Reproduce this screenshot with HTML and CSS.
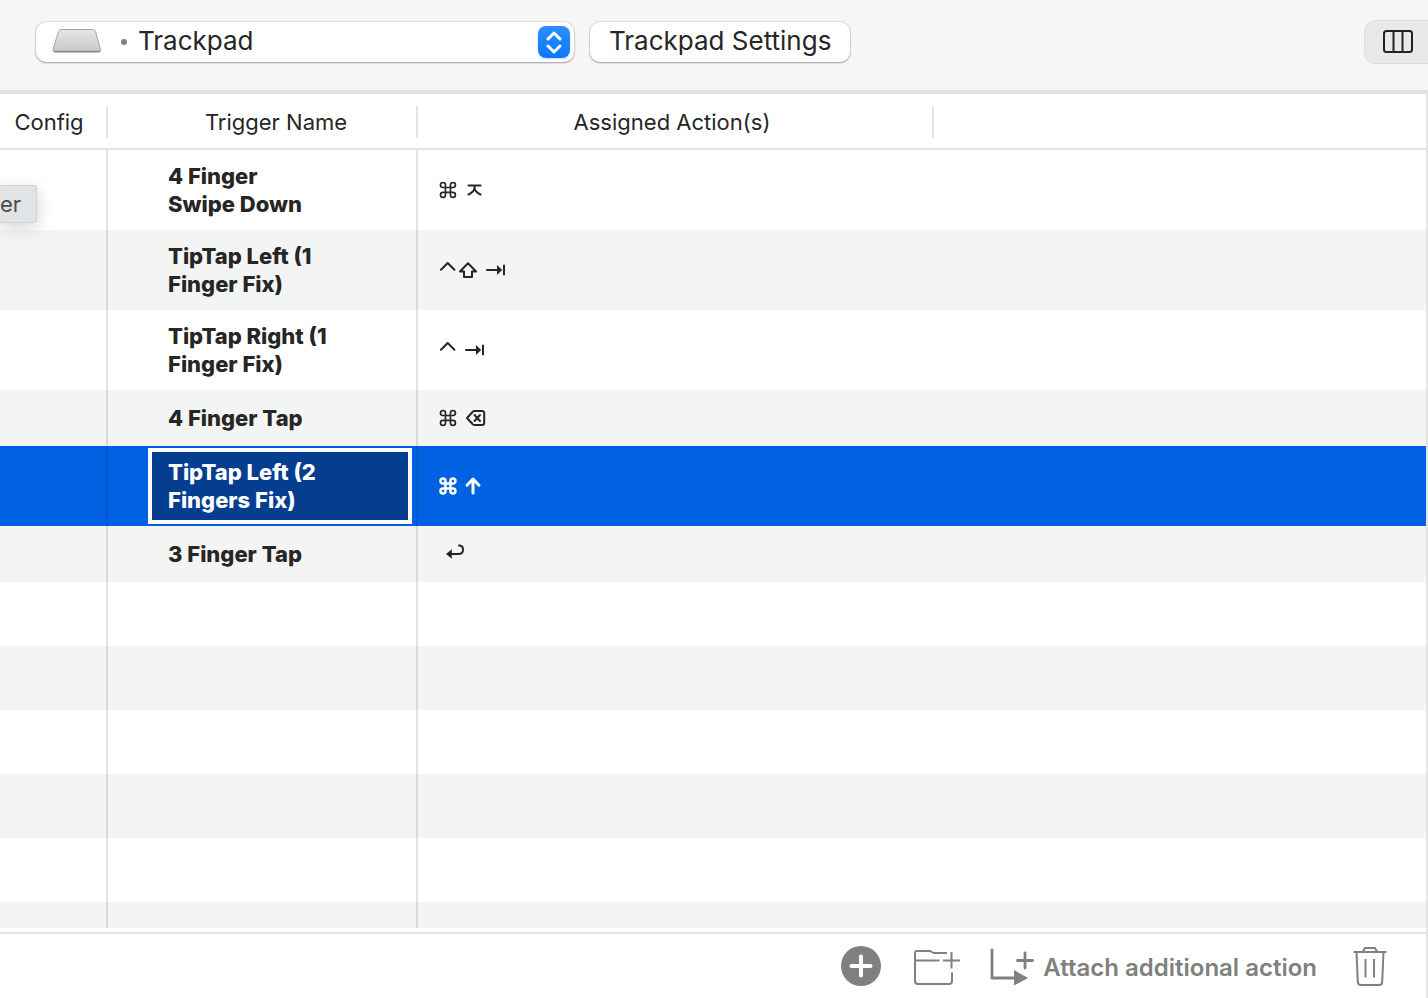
FILE: index.html
```html
<!DOCTYPE html>
<html lang="en">
<head>
<meta charset="utf-8">
<title>Trackpad triggers</title>
<link rel="stylesheet" href="styles.css">
</head>
<body>
<svg class="defs" aria-hidden="true">
  <symbol id="command" viewBox="0 0 28 28"><path transform="translate(2 4) scale(.83)" d="M18 3a3 3 0 0 0-3 3v12a3 3 0 0 0 3 3 3 3 0 0 0 3-3 3 3 0 0 0-3-3H6a3 3 0 0 0-3 3 3 3 0 0 0 3 3 3 3 0 0 0 3-3V6a3 3 0 0 0-3-3 3 3 0 0 0-3 3 3 3 0 0 0 3 3h12a3 3 0 0 0 3-3 3 3 0 0 0-3-3z"/></symbol>
  <symbol id="control" viewBox="0 0 28 28"><path d="M5 13.700l6.700-6.700 6.700 6.700"/></symbol>
  <symbol id="tab" viewBox="0 0 28 28"><path d="M3 14h11M20 9.500v9"/><path class="solid" d="M13 9l5.200 5-5.200 5z"/></symbol>
</svg>

<header class="toolbar">
  <div class="picker">
    <svg class="picker-icon" width="50" height="26" viewBox="0 0 50 26" aria-hidden="true">
      <defs><linearGradient id="pad" x1="0" y1="0" x2="0" y2="1"><stop offset="0" stop-color="#e6e6e6"/><stop offset="1" stop-color="#c8c8c8"/></linearGradient></defs>
      <path d="M9.500 1.500h31q2.200 0 3 2l5 18q.6 2.500-2 2.500H3q-2.600 0-2-2.500l5.500-18q.8-2 3-2z" fill="url(#pad)" stroke="#a6a6a6"/>
      <path d="M2 23.500h46" stroke="#8c8c8c" stroke-width="1.500"/>
    </svg>
    <span class="dot"></span>
    <select class="picker-select" aria-label="Device"><option>Trackpad</option></select>
    <span class="stepper">
      <svg width="32" height="32" viewBox="0 0 32 32" aria-hidden="true"><path d="M10 13l6-6 6 6M10 20l6 6 6-6"/></svg>
    </span>
  </div>
  <button class="push" type="button">Trackpad Settings</button>
  <button class="segment" type="button" aria-label="Column view">
    <svg width="32" height="26" viewBox="0 0 32 26" aria-hidden="true"><rect x="2" y="2" width="28" height="21" rx="2.500" fill="none" stroke="#222" stroke-width="2"/><path d="M11.500 2v21M20.500 2v21" stroke="#222" stroke-width="2"/></svg>
  </button>
</header>

<main class="pane">
  <div class="scroller">
    <table class="triggers">
      <colgroup><col class="col-config"><col class="col-name"><col class="col-action"><col></colgroup>
      <thead>
        <tr>
          <th scope="col"><div class="head head-config">Config</div></th>
          <th scope="col"><div class="head head-name">Trigger Name</div></th>
          <th scope="col"><div class="head head-action">Assigned Action(s)</div></th>
          <td></td>
        </tr>
      </thead>
      <tbody>
        <tr>
          <td></td><td class="name"><div class="label">4 Finger<br>Swipe Down</div></td>
          <td class="keys"><svg width="80" height="28" role="img" aria-label="Command Enter"><use href="#command" width="28" height="28"/><path d="M32.500 9.500h12M38.500 9.500v2q0 4-6 7M38.500 11.500q0 4 6 7"/></svg></td><td></td>
        </tr>
        <tr>
          <td></td><td class="name"><div class="label">TipTap Left (1<br>Finger Fix)</div></td>
          <td class="keys"><svg width="80" height="28" role="img" aria-label="Control Shift Tab"><use href="#control" width="28" height="28"/><path d="M32 7.300l8 8.200h-4V21h-8v-5.500h-4z"/><use href="#tab" x="48" width="28" height="28"/></svg></td><td></td>
        </tr>
        <tr>
          <td></td><td class="name"><div class="label">TipTap Right (1<br>Finger Fix)</div></td>
          <td class="keys"><svg width="80" height="28" role="img" aria-label="Control Tab"><use href="#control" width="28" height="28"/><use href="#tab" x="27" width="28" height="28"/></svg></td><td></td>
        </tr>
        <tr>
          <td></td><td class="name"><div class="label">4 Finger Tap</div></td>
          <td class="keys"><svg width="80" height="28" role="img" aria-label="Command Delete"><use href="#command" width="28" height="28"/><path d="M31 14l5.500-6q.8-1 2-1H46q2.200 0 2.200 2.200v9.600Q48.200 21 46 21h-7.500q-1.200 0-2-1zM38.500 11l5.500 6M44 11l-5.500 6"/></svg></td><td></td>
        </tr>
        <tr class="selected" aria-selected="true">
          <td></td><td class="name"><div class="label">TipTap Left (2<br>Fingers Fix)</div></td>
          <td class="keys"><svg width="80" height="28" role="img" aria-label="Command Up"><use href="#command" width="28" height="28"/><path d="M37 21V7.500M31 13.200L37 7l6 6.200"/></svg></td><td></td>
        </tr>
        <tr>
          <td></td><td class="name"><div class="label">3 Finger Tap</div></td>
          <td class="keys"><svg width="80" height="28" role="img" aria-label="Return"><path d="M14 14h8.500c3 0 4.500-2 4.500-4.500S25.500 5.500 23 5.500"/><path class="solid" d="M15.800 9.200v9.600L10 14z"/></svg></td><td></td>
        </tr>
        <tr class="blank"><td></td><td></td><td></td><td></td></tr>
        <tr class="blank"><td></td><td></td><td></td><td></td></tr>
        <tr class="blank"><td></td><td></td><td></td><td></td></tr>
        <tr class="blank"><td></td><td></td><td></td><td></td></tr>
        <tr class="blank"><td></td><td></td><td></td><td></td></tr>
        <tr class="blank"><td></td><td></td><td></td><td></td></tr>
      </tbody>
    </table>
  </div>
  <div class="tip" role="tooltip">er</div>
  <footer class="actions">
    <button class="tool" type="button" aria-label="Add">
      <svg width="40" height="40" viewBox="0 0 40 40" aria-hidden="true"><circle cx="20" cy="20" r="20" fill="#808080"/><path d="M20 10.500v19M10.500 20h19" stroke="#fff" stroke-width="4" stroke-linecap="round"/></svg>
    </button>
    <button class="tool" type="button" aria-label="New group">
      <svg width="50" height="40" viewBox="0 0 50 40" aria-hidden="true"><path d="M41 26.500V35q0 3-3 3H7q-3 0-3-3V7q0-2 2-2h12q2 0 2.800 1t2.700 1H36M4 14.500h24.500M40.500 6v16.500M32 14.500h17" fill="none" stroke="#808080" stroke-width="2"/></svg>
    </button>
    <button class="tool tool-attach" type="button">
      <svg width="46" height="40" viewBox="0 0 46 40" aria-hidden="true"><path d="M3 4v28h22M36 7v15M28.500 14.500h15" fill="none" stroke="#808080" stroke-width="2.800" stroke-linecap="round" stroke-linejoin="round"/><path d="M25 24l14 8-14 7.500z" fill="#808080"/></svg>
      <span class="tool-text">Attach additional action</span>
    </button>
    <button class="tool" type="button" aria-label="Delete">
      <svg width="34" height="40" viewBox="0 0 34 40" aria-hidden="true"><path d="M.5 6h33M10 5.500L12 2h10l2 3.500M3.500 6l1.300 30q.2 3 3 3h18.400q2.800 0 3-3l1.300-30M12.500 13v18.500M21 13v18.500" fill="none" stroke="#808080" stroke-width="2"/></svg>
    </button>
  </footer>
</main>
</body>
</html>
```

FILE: styles.css
```css
* { box-sizing: border-box; }
body {
  margin: 0;
  height: 100vh;
  display: flex;
  flex-direction: column;
  overflow: hidden;
  background: #fff;
  color: #262626;
  font-family: Inter, "Liberation Sans", sans-serif;
  font-size: 22px;
  line-height: 28px;
}
button, select { font: inherit; color: inherit; border: 0; margin: 0; }
svg { display: block; flex: none; }
.defs { position: absolute; width: 0; height: 0; }

.toolbar {
  display: flex;
  align-items: center;
  gap: 16px;
  padding: 20px 0 26px 36px;
  background: #f6f6f5;
  border-bottom: 4px solid #e0e0e0;
  font-size: 26px;
}
.picker, .push {
  height: 40px;
  background: #fff;
  border-radius: 10px;
  box-shadow: 0 0 1px 1px rgba(0, 0, 0, .08), 0 1px 2px rgba(0, 0, 0, .3);
}
.picker {
  flex: 0 1 538px;
  display: flex;
  align-items: center;
  padding: 0 4px 0 16px;
}
.picker-icon { margin-bottom: 2px; }
.dot { width: 6px; height: 6px; margin: 0 11px 0 19px; border-radius: 50%; background: #808080; }
.picker-select {
  flex: 1;
  min-width: 0;
  height: 40px;
  padding: 0 0 2px;
  appearance: none;
  background: transparent;
}
.stepper { border-radius: 8px; background: linear-gradient(#2b8fff, #0a78ff); box-shadow: 0 1px 2px rgba(0, 90, 220, .25); }
.stepper path { fill: none; stroke: #fff; stroke-width: 3; stroke-linecap: round; stroke-linejoin: round; }
.push { padding: 0 19px 2px; white-space: nowrap; }
.segment {
  width: 64px;
  height: 44px;
  margin-left: auto;
  padding: 0 0 0 17px;
  border: 1px solid #dededd;
  border-right: 0;
  border-radius: 12px 0 0 12px;
  background: #e9e9e9;
}

.pane {
  position: relative;
  flex: 1;
  min-height: 0;
  display: flex;
  flex-direction: column;
  border-right: 2px solid #e4e4e4;
}
.scroller { flex: 1; min-height: 0; overflow: hidden; }
.triggers { width: 100%; table-layout: fixed; border-spacing: 0; }
.col-config { width: 108px; }
.col-name { width: 310px; }
.col-action { width: 516px; }
td, th { padding: 0; font-weight: 400; }
thead th, thead td { padding: 12px 0 10px; border-bottom: 2px solid #e4e4e4; }
.head { height: 32px; line-height: 32px; border-right: 2px solid #e4e4e4; text-align: center; white-space: nowrap; }
.head-config { padding-right: 8px; }
.head-name { padding-left: 28px; }
.head-action { padding-right: 6px; }

tbody td { height: 56px; border-right: 2px solid rgba(0, 0, 0, .1); }
tbody td:nth-child(n+3) { border-right: 0; }
tbody tr:nth-child(even) { background: #f3f4f4; }
tbody .blank td { height: 64px; }
.name { padding: 2px 4px 2px 40px; font-weight: 800; white-space: nowrap; }
.label { padding: 6px 16px; border: 4px solid transparent; }
.keys { padding-left: 18px; }
.keys svg { fill: none; stroke: currentColor; stroke-width: 2; stroke-linecap: round; stroke-linejoin: round; }
.keys .solid { fill: currentColor; stroke: none; }
.solid { fill: currentColor; stroke: none; }
tbody .selected { background: #0062e3; color: #fff; }
.selected .label { background: #063e8f; border-color: #fff; }
.selected .keys svg { stroke-width: 3; }

.tip {
  position: absolute;
  top: 91px;
  left: 0;
  padding: 4px 15px 4px 0;
  background: #e2e3e4;
  color: #4c4c4c;
  border: 1px solid #d2d3d4;
  border-left: 0;
  border-radius: 0 3px 3px 0;
  box-shadow: 0 4px 16px rgba(0, 0, 0, .18);
}

.actions {
  display: flex;
  align-items: center;
  justify-content: flex-end;
  height: 66px;
  margin-top: 4px;
  padding: 0 39px 0 16px;
  border-top: 2px solid #e4e4e4;
}
.tool { display: flex; align-items: center; padding: 0; background: transparent; color: #808080; margin-left: 30px; }
.tool-attach { gap: 8px; margin-left: 28px; font-size: 24px; font-weight: 600; white-space: nowrap; }
.tool-attach + .tool { margin-left: 36px; }
.tool-text { padding-top: 4px; }
```
